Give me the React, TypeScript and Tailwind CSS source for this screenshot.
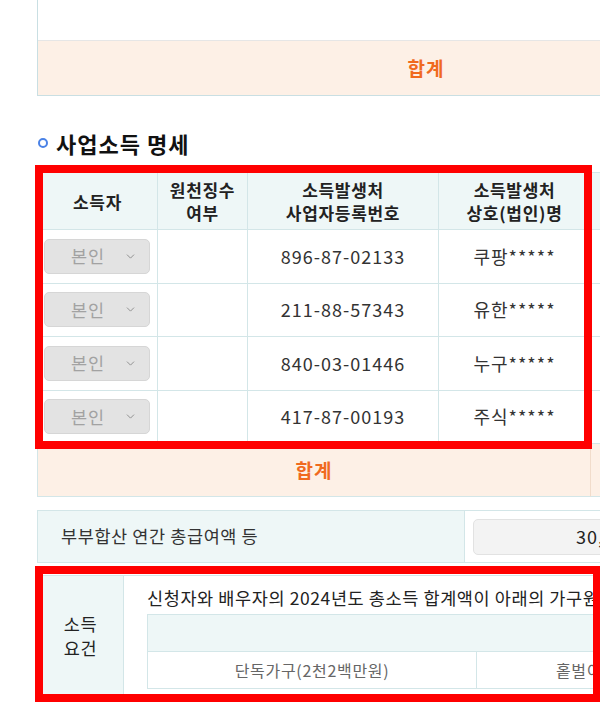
import { ChevronDown } from "lucide-react";

const rows = [
  { no: "896-87-02133", name: "쿠팡*****" },
  { no: "211-88-57343", name: "유한*****" },
  { no: "840-03-01446", name: "누구*****" },
  { no: "417-87-00193", name: "주식*****" },
];

const cell = "border-r border-b border-[#d3e6e8] flex items-center justify-center";
const head = `${cell} bg-[#eef7f7] text-center text-[17px] tracking-[0.7px] font-bold leading-[23px] text-[#222]`;

function OwnerSelect() {
  return (
    <div className="flex h-[35px] w-[106px] items-center rounded-[5px] border border-[#d6d6d6] bg-[#e3e3e3] pl-[26px] pr-[12px]">
      <span className="flex-1 text-[17.5px] tracking-[1px] text-[#a2a2a2]">본인</span>
      <ChevronDown className="h-[13px] w-[13px] text-[#8f8f8f]" strokeWidth={1.8} />
    </div>
  );
}

export default function App() {
  return (
    <div className="relative h-[721px] w-[600px] overflow-hidden bg-white font-['Noto_Sans_CJK_KR',sans-serif] text-[#333]">
      <div className="w-[1000px] pl-[37px]">
        {/* 앞 표의 끝부분 */}
        <div className="border-b border-l border-[#c9dfe3]">
          <div className="h-[41px] border-b border-[#e6e6e6] bg-white" />
          <div className="flex h-[54px] bg-[#fdf0e6]">
            <div className="flex w-[776px] items-center justify-center text-[19px] font-bold tracking-[1px] text-[#f06a1e]">
              합계
            </div>
          </div>
        </div>

        {/* 제목 */}
        <div className="mt-[32px] flex h-[30px] items-center gap-[8px]">
          <span className="ml-[1px] h-[10px] w-[10px] shrink-0 rounded-full border-[2.5px] border-[#4a82e6]" />
          <h2 className="text-[22px] font-bold tracking-[1px] text-[#111]">사업소득 명세</h2>
        </div>

        {/* 사업소득 명세 표 */}
        <div className="mt-[14px] grid grid-cols-[120px_90px_191px_152px_160px_160px] border-l border-t border-[#d3e6e8]">
          <div className={`${head} h-[57px]`}>소득자</div>
          <div className={head}>
            원천징수
            <br />
            여부
          </div>
          <div className={head}>
            소득발생처
            <br />
            사업자등록번호
          </div>
          <div className={head}>
            소득발생처
            <br />
            상호(법인)명
          </div>
          <div className={head} />
          <div className={head} />

          {rows.map((r) => (
            <div key={r.no} className="contents">
              <div className={`${cell} h-[53.5px] justify-start pl-[6px]`}>
                <OwnerSelect />
              </div>
              <div className={cell} />
              <div className={`${cell} text-[18px] tracking-[1px]`}>{r.no}</div>
              <div className={`${cell} text-[18px] tracking-[1px]`}>{r.name}</div>
              <div className={cell} />
              <div className={cell} />
            </div>
          ))}

          <div
            className={`${cell} col-span-4 h-[53px] border-r-[#f1dccb] bg-[#fdf0e6] text-[19px] font-bold tracking-[1px] text-[#f06a1e]`}
          >
            합계
          </div>
          <div className={`${cell} bg-[#fdf0e6]`} />
          <div className={`${cell} bg-[#fdf0e6]`} />
        </div>

        {/* 부부합산 */}
        <div className="mt-[13px] flex h-[53px] border border-[#d3e6e8]">
          <div className="flex w-[427px] shrink-0 items-center border-r border-[#d3e6e8] bg-[#eef7f7] pl-[23px] text-[17.5px] tracking-[0.6px]">
            부부합산 연간 총급여액 등
          </div>
          <div className="flex items-center pl-[8px]">
            <div className="flex h-[36px] w-[216px] items-center justify-end rounded-[5px] border border-[#e2e2e2] bg-[#f3f3f3] pr-[12px] text-[18px] tracking-[1px] text-[#222]">
              30,000,000
            </div>
          </div>
        </div>

        {/* 소득 요건 */}
        <div className="mt-[12px] flex border border-[#d3e6e8]">
          <div className="flex w-[86px] shrink-0 items-center justify-center border-r border-[#d3e6e8] bg-[#eef7f7] text-center text-[17.5px] leading-[24px] tracking-[0.6px] text-[#222]">
            소득
            <br />
            요건
          </div>
          <div className="min-w-0 flex-1 pb-[7px] pl-[23px] pt-[7px]">
            <p className="h-[30px] whitespace-nowrap text-[17.5px] leading-[30px] tracking-[0.6px] text-[#222]">
              신청자와 배우자의 2024년도 총소득 합계액이 아래의 가구원 구성에 따라 정한 금액 미만
            </p>
            <div className="mt-[1px] w-[990px] border border-[#d3e6e8]">
              <div className="h-[37px] border-b border-[#d3e6e8] bg-[#eef7f7]" />
              <div className="grid h-[36px] grid-cols-[329px_329px_329px] text-[16px] tracking-[0.7px] text-[#666]">
                <div className="flex items-center justify-center border-r border-[#d3e6e8]">
                  단독가구(2천2백만원)
                </div>
                <div className="flex items-center justify-center border-r border-[#d3e6e8]">
                  홑벌이가구(3천2백만원)
                </div>
                <div className="flex items-center justify-center">맞벌이가구(4천4백만원)</div>
              </div>
            </div>
          </div>
        </div>
      </div>

      {/* 강조 표시 */}
      <div className="pointer-events-none absolute left-[35px] top-[165px] h-[284px] w-[557px] border-[8px] border-[#ff0000]" />
      <div className="pointer-events-none absolute left-[35px] top-[566px] h-[136px] w-[566px] border-[8px] border-[#ff0000]" />
    </div>
  );
}
